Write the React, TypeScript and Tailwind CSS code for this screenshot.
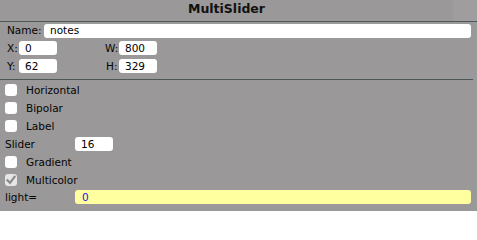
import React from "react";

const font = { fontFamily: '"DejaVu Sans", Verdana, sans-serif' };

function Box({ checked = false }: { checked?: boolean }) {
  return (
    <div
      className={
        "w-[12px] h-[12px] rounded-[3px] flex items-center justify-center " +
        (checked ? "bg-[#e6e6e6]" : "bg-white")
      }
    >
      {checked && (
        <svg width="10" height="10" viewBox="0 0 10 10">
          <path d="M1.5 5.2 L4 7.8 L8.6 1.8" fill="none" stroke="#8a8a8a" strokeWidth="2.2" strokeLinecap="square" />
        </svg>
      )}
    </div>
  );
}

function CheckRow({ label, checked = false }: { label: string; checked?: boolean }) {
  return (
    <div className="h-[18px] flex items-center pl-[5px]">
      <Box checked={checked} />
      <span className="ml-[9px]">{label}</span>
    </div>
  );
}

function Field({ value, className = "" }: { value: string; className?: string }) {
  return (
    <div className={"bg-white rounded-[3px] h-[14px] flex items-center pl-[6px] text-black " + className}>
      {value}
    </div>
  );
}

export default function App() {
  return (
    <div className="w-[477px] h-[211px] bg-[#9a9898] overflow-hidden text-[10.5px] leading-none text-[#050505]" style={font}>
      <div className="flex h-[22px] border-b border-[#4d5757]">
        <div className="w-[453px] flex items-center justify-center font-bold text-[12.5px] text-[#111] pb-[2px]">
          MultiSlider
        </div>
        <div className="flex-1 bg-[#9f9d9e]" />
      </div>

      <div className="flex items-center pl-[7px] mt-[2px] h-[13px]">
        <span className="w-[37px]">Name:</span>
        <Field value="notes" className="w-[427px] h-[13px]" />
      </div>

      <div className="flex items-center pl-[7px] mt-[4px] h-[14px]">
        <span className="w-[12px]">X:</span>
        <Field value="0" className="w-[38px]" />
        <span className="ml-[48px] w-[14px]">W:</span>
        <Field value="800" className="w-[38px]" />
      </div>

      <div className="flex items-center pl-[7px] mt-[4px] h-[14px]">
        <span className="w-[12px]">Y:</span>
        <Field value="62" className="w-[38px]" />
        <span className="ml-[48px] w-[14px] pl-[1px]">H:</span>
        <Field value="329" className="w-[38px]" />
      </div>

      <div className="mt-[6px] w-[473px] h-[1px] bg-[#4d5757]" />

      <div className="mt-[1px]">
        <CheckRow label="Horizontal" />
        <CheckRow label="Bipolar" />
        <CheckRow label="Label" />
        <div className="h-[18px] flex items-center pl-[5px]">
          <span className="w-[70px]">Slider</span>
          <Field value="16" className="w-[38px]" />
        </div>
        <CheckRow label="Gradient" />
        <CheckRow label="Multicolor" checked />
        <div className="h-[16px] flex items-center pl-[5px]">
          <span className="w-[70px]">light=</span>
          <div className="bg-[#ffffa0] rounded-[3px] h-[14px] w-[396px] flex items-center pl-[7px] text-[#1a1ad0]">
            0
          </div>
        </div>
      </div>
    </div>
  );
}
